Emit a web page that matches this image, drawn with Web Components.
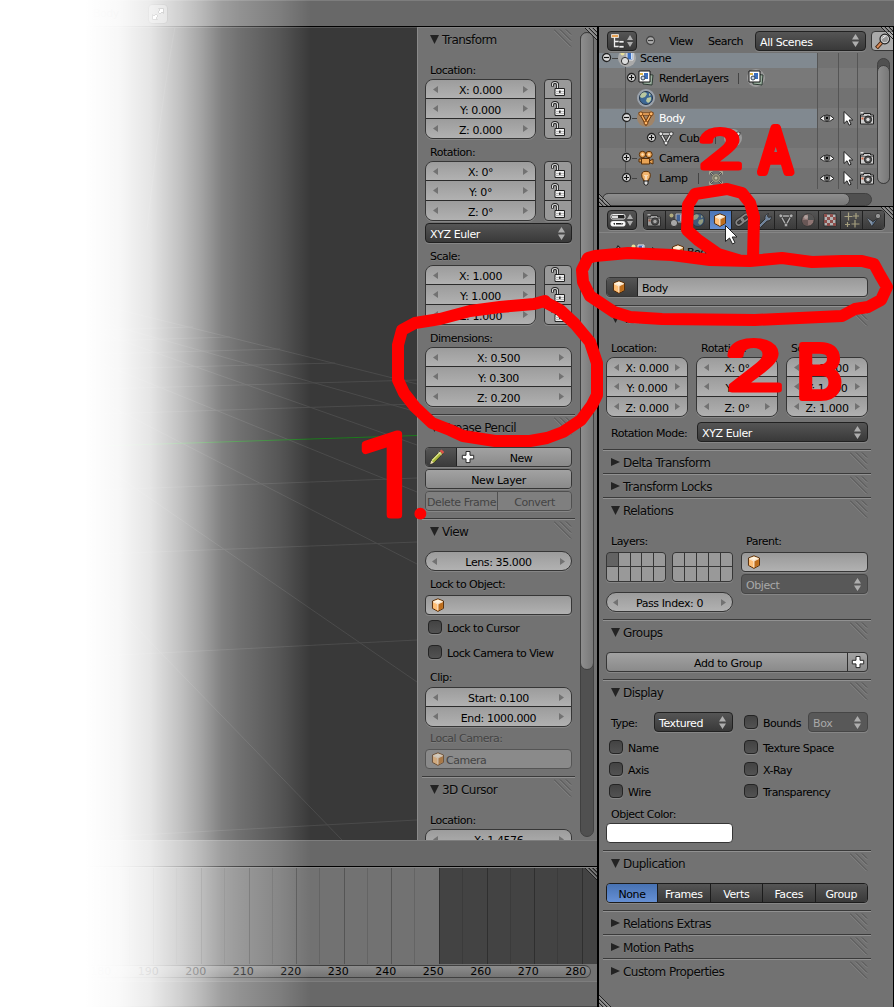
<!DOCTYPE html>
<html lang="en">
<head>
<meta charset="utf-8">
<title>Blender</title>
<style>
html,body{margin:0;padding:0;background:#fff;overflow:hidden}
body{font:11px/16px "DejaVu Sans",sans-serif;letter-spacing:-.5px;color:#000}
</style>
</head>
<body>
<bl-app></bl-app>
<script>
const def=(name,render)=>customElements.define(name,class extends HTMLElement{
  constructor(){super();this.attachShadow({mode:'open'});}
  connectedCallback(){
    const t=document.createElement('template');
    t.innerHTML=render(this);
    this.shadowRoot.replaceChildren(t.content.cloneNode(true));
  }
});

const scene='<path d="M8 2h6v8H8z" fill="#3d6fc0" stroke="#eee"/><path d="M12 3h1.5v6H12z" fill="#cfe0f5"/><circle cx="6" cy="11" r="3.6" fill="#ddd" stroke="#333"/><circle cx="3.5" cy="3.5" r="2" fill="#e9e09a"/>';
const layers='<path d="M5 4l10 1-1 10-9-1z" fill="#9ab09e" stroke="#2d3a33"/><path d="M1 1h11v11H1z" fill="#fff" stroke="#111"/><path d="M6 3h4v6H6z" fill="#3a6ebd"/><circle cx="5" cy="8" r="2" fill="#c8d4e4" stroke="#345"/><path d="M2 3h3v2H2z" fill="#dcb54a"/>';
const globe='<circle cx="8" cy="8" r="6.5" fill="#3c6795" stroke="#24364a"/><path d="M4 3q4-2 5 1l-2 3-3 1-2-1q0-2 2-4zM9 8l4-1q1 4-3 6l-2-2zM11 3l2 2-2 1z" fill="#b9c8a0"/>';
const tri=(c,d)=>`<path d="M3 4h10L8 13z" fill="none" stroke="${d}" stroke-width="3.2"/><path d="M3 4h10L8 13z" fill="none" stroke="${c}" stroke-width="1.4"/><g fill="${c}" stroke="${d}" stroke-width=".8"><circle cx="2.8" cy="3.8" r="1.9"/><circle cx="13.2" cy="3.8" r="1.9"/><circle cx="8" cy="13" r="1.9"/></g>`;
const ICONS={
  cube:'<g transform="translate(.6 .6) scale(.92)"><path d="M8 1.3l6 2.4v8L8 15 2 11.700v-8z" fill="#e79a42" stroke="#4c2606"/><path d="M8 2l5.200 2L8 6.500 2.800 4z" fill="#fff3df"/><path d="M2.700 4.500L8 7v7.200l-5.300-2.800z" fill="#ffc078"/><path d="M13.300 4.500L8 7v7.200l5.300-2.800z" fill="#bd6d1c"/><path d="M2.700 4.400L8 6.900l5.300-2.500M8 7v6.800" fill="none" stroke="#fff" stroke-width=".9"/></g>',
  lock:'<path d="M2.500 5.500V3.500q0-2 2.500-2t2.500 2V8" fill="none" stroke="#222" stroke-width="3"/><path d="M2.500 5V3.500q0-2 2.500-2t2.500 2V8" fill="none" stroke="#ddd" stroke-width="1.200"/><path d="M5 7.500h9.500v7H5z" fill="#eee" stroke="#222"/><path d="M5.500 10.500h8.500M5.500 12.500h8.500" stroke="#bbb"/><path d="M9.200 9.500h1.300v2.500H9.200z" fill="#111"/>',
  plus:'<path d="M6 2.500h4v3.800h3.700v3.600H10v3.700H6V9.900H2.300V6.300H6z" fill="#fff" stroke="#2a2a2a"/>',
  pencil:'<path d="M1.500 15l1-4L11 2l3 2.700-8.800 9z" fill="#a9b83a" stroke="#222" stroke-width=".8"/><path d="M3 11.500L11.500 3" stroke="#dde28a" stroke-width="1.300"/><path d="M10.500 2l2-1.500 2.700 2.400-1.500 2z" fill="#d9534a"/><path d="M9.500 3.200l3 2.600" stroke="#ddd"/><path d="M1.200 15.200l1-3.700 2.600 2.300z" fill="#eddcb0"/>',
  eye:'<path d="M1 8.500Q8 1.500 15 8.500 8 14.500 1 8.500z" fill="#fff" stroke="#222"/><circle cx="8" cy="8" r="2.800" fill="#777" stroke="#333" stroke-width=".8"/><circle cx="8" cy="8" r="1.200" fill="#000"/>',
  cursor:'<path d="M4 1.500v12l3-2.700 2.100 4.400 2-1-2-4.200h3.700z" fill="#fff" stroke="#222"/>',
  render:'<path d="M1.500 5h3V3.500h7V5h3v9h-13z" fill="#ccc" stroke="#222"/><path d="M2 6.500h12" stroke="#777"/><circle cx="9" cy="9.500" r="3.600" fill="#555" stroke="#222"/><circle cx="9" cy="9.500" r="1.700" fill="#ddd"/><path d="M2.500 7.500h2v2h-2z" fill="#c64"/><path d="M1.500 2h3v1.500h-3z" fill="#ddd"/>',
  scene, layers:layers, globe:globe,
  meshO:tri('#ffb769','#6b3508'), mesh:tri('#e8e8e8','#333'),
  camera:'<g fill="#e8a355" stroke="#5a3008"><circle cx="4.500" cy="4.500" r="3.200"/><circle cx="11" cy="4.500" r="3.200"/><path d="M3.500 8.500h8V14h-8z"/><path d="M11.500 11l3.500-2v5l-3.500-1.500zM1 9h2.500v3H1z"/></g><g fill="#ffe3bb"><circle cx="4.500" cy="4.500" r="1.200"/><circle cx="11" cy="4.500" r="1.200"/></g>',
  lamp:'<path d="M5.500 11Q5.500 9 4 7.300 2.500 1.300 8 1.300T12 7.300Q10.500 9 10.500 11z" fill="#f3b56e" stroke="#5a3008"/><path d="M6.500 5l1.500 1.500L9.500 5M8 6.500V11" stroke="#fff" fill="none"/><path d="M6 11h4v3l-2 1.500L6 14z" fill="#ddd" stroke="#222"/>',
  lampData:'<g opacity=".75"><g fill="none" stroke="#444" stroke-width="2"><path d="M2 2l3 3M14 2l-3 3M2 14l3-3M14 14l-3-3"/></g><g fill="none" stroke="#bbb8a0"><path d="M1.500 4.500v-3h3M11.500 1.500h3v3M14.500 11.500v3h-3M4.500 14.500h-3v-3M2 2l3 3M14 2l-3 3M2 14l3-3M14 14l-3-3"/></g><circle cx="8" cy="8" r="3.400" fill="#77755e" stroke="#b5b08a"/><circle cx="8" cy="8" r="1.500" fill="#ddd8b8"/></g>',
  link:'<g fill="none" stroke="#262626" stroke-width="3.600"><rect x="1.500" y="7" width="8" height="5" rx="2.500" transform="rotate(-38 6 9)"/><rect x="7" y="3.500" width="8" height="5" rx="2.500" transform="rotate(-38 11 6)"/></g><g fill="none" stroke="#aaa" stroke-width="1.700"><rect x="1.500" y="7" width="8" height="5" rx="2.500" transform="rotate(-38 6 9)"/><rect x="7" y="3.500" width="8" height="5" rx="2.500" transform="rotate(-38 11 6)"/></g>',
  wrench:'<path d="M2.500 13.500L9 7q-1-4 3.500-5.500L11.500 4l1.200 1.500 2.600-1q.5 4.500-4.200 4.600L4.500 15.500z" fill="#88a5c8" stroke="#222"/>',
  material:'<circle cx="8" cy="8" r="6.200" fill="#b5908c" stroke="#2a2a2a"/><path d="M8 2v6h6a6 6 0 0 0-6-6z" fill="#5a5a5a"/><path d="M2 8h6v6a6 6 0 0 1-6-6z" fill="#7d6260"/><circle cx="6" cy="5" r="2" fill="#e3cbc7"/>',
  texture:'<path d="M2 2h12v12H2z" fill="#eee" stroke="#222"/><path d="M2 2h3v3H2zM8 2h3v3H8zM5 5h3v3H5zM11 5h3v3h-3zM2 8h3v3H2zM8 8h3v3H8zM5 11h3v3H5zM11 11h3v3h-3z" fill="#b5544f"/>',
  particles:'<g stroke="#d9cf9d" stroke-width="1.200"><path d="M4.500.5v8M.5 4.500h8M12 1v6M9 4h6M11 8v7.500M7.500 12h8M3.500 10v5M1 12.500h5"/></g>',
  physics:'<path d="M1 6l5 8.500L12 6 7 9.500z" fill="#6c8fb8" stroke="#222"/><path d="M1 6l5 3.500L6 14z" fill="#a7bfda"/><circle cx="12" cy="4" r="2.700" fill="#bbb" stroke="#333"/>',
  tree:'<path d="M4.500 4v9.500H9M4.500 8.500H9" fill="none" stroke="#eee" stroke-width="1.300"/><path d="M1.500 1.500h7v3h-7z" fill="#e8a355" stroke="#eee" stroke-width=".8"/><path d="M9 7.500h5v2.500H9zM9 12.500h5V15H9z" fill="#eee" stroke="#222" stroke-width=".6"/>',
  props:'<g stroke="#eee"><rect x="1" y="2.500" width="14" height="4.500" rx="1.500" fill="#222"/><rect x="1" y="9.500" width="14" height="4.500" rx="1.500" fill="#fff"/></g><path d="M2 3.500h6v2.500H2z" fill="#ddd"/><path d="M6 11h5v1.500H6zM5 10.700v2.200l-2-1.100zM11.500 10.700v2.200l2-1.100z" fill="#222"/>',
  search:'<path d="M7 9L1.500 15" stroke="#41210a" stroke-width="4"/><path d="M7 9L2 14.500" stroke="#d98b5a" stroke-width="2"/><circle cx="9.800" cy="6" r="4.800" fill="#d9d9d9" stroke="#222" stroke-width="1.200"/><circle cx="9.800" cy="6" r="3.200" fill="#999"/><path d="M7.500 5.500q1-2 3-2" stroke="#fff" fill="none"/>',
  pin:'<path d="M1 14l5-4M5 8l3-5 6 6-5 2z" fill="#ddd" stroke="#222" stroke-width="1.200"/>',
  full:'<g fill="#fff" stroke="#333"><path d="M8.500 2.500h5V7.500L12 6 10 8 8 6l2-2zM7.500 13.500h-5V8.500L4 10l2-2 2 2-2 2z"/></g>'
};

def('bl-icon',e=>`<style>:host{display:block;flex:none;width:16px;height:16px}svg{display:block;width:100%;height:100%}</style><svg viewBox="0 0 16 16">${ICONS[e.getAttribute('name')]}</svg>`);

def('bl-grip',()=>`<style>:host{display:block;width:18px;height:18px}svg{display:block}</style>
<svg width="18" height="18" fill="none"><path d="M0 1.500l16.500 16.500M6 1.500l11 11M12 1.500l5 5" stroke="#8b8b8b"/><path d="M0 .5l17 17M6 .5l11 11M12 .5l5 5" stroke="#505050"/></svg>`);

def('bl-corner',()=>`<style>:host{display:block;width:12px;height:12px;position:absolute}svg{display:block}</style>
<svg width="12" height="12" fill="none"><path d="M0 0l12 12M4 0l8 8M8 0l4 4" stroke="#222"/><path d="M1.500 0l11 11M5.500 0l7 7M9.500 0l3 3" stroke="#aaa"/></svg>`);

def('bl-panel',e=>`<style>
:host{display:flex;flex-direction:column;box-sizing:border-box;border-top:1px solid #3a3a3a;flex:none}
:host([first]){border-top-color:transparent}
header{height:23px;box-sizing:border-box;border-top:1px solid #919191;display:flex;align-items:flex-start;padding:0 3px 0 8px;font-size:12px;letter-spacing:-.55px;color:#080808;text-shadow:0 1px 0 rgba(255,255,255,.12);flex:none}
:host([first]) header{border-top-color:transparent}
svg{margin-top:7px;flex:none}span{flex:1;padding-left:3px;line-height:16px;margin-top:4px;white-space:nowrap}
bl-grip{margin-top:1px}
.b{padding:0 3px;display:flex;flex-direction:column}
</style><header><svg width="9" height="9"><path d="${e.hasAttribute('closed')?'M0 0L9 4 0 8z':'M0 0h9L4.500 9z'}" fill="#232323"/></svg><span>${e.getAttribute('label')}</span><bl-grip></bl-grip></header><div class="b"><slot></slot></div>`);

def('bl-num',e=>`<style>
:host{display:flex;box-sizing:border-box;height:20px;align-items:flex-end;justify-content:space-between;padding:0 7px;background:linear-gradient(#9c9c9c,#b1b1b1);position:relative;border-top:1px solid #2b2b2b;line-height:14px;letter-spacing:-.4px}
:host(:first-child){height:18px;border-top:0}
:host([solo]){height:20px;border:1px solid #363636;border-radius:10px;box-shadow:0 1px 0 #868686;padding:0 6px}
span{flex:1;text-align:center;white-space:nowrap}svg{align-self:center;flex:none}
</style><svg width="5" height="7"><path d="M5 0v7L0 3.500z" fill="#727272"/></svg><span>${e.getAttribute('label')}</span><svg width="5" height="7"><path d="M0 0v7l5-3.500z" fill="#727272"/></svg>`);

def('bl-stack',()=>`<style>:host{display:flex;flex-direction:column;box-sizing:border-box;border:1px solid #363636;border-radius:8px;overflow:hidden;box-shadow:0 1px 0 #868686}</style><slot></slot>`);

def('bl-locks',()=>`<style>:host{display:flex;flex-direction:column;box-sizing:border-box;width:28px;height:60px;border:1px solid #363636;border-radius:4px;overflow:hidden;box-shadow:0 1px 0 #868686;background:#999}
div{height:20px;box-sizing:border-box;border-top:1px solid #2b2b2b;display:flex;justify-content:center;align-items:center;flex:none}div:first-of-type{height:18px;border:0}</style><div><bl-icon name="lock"></bl-icon></div><div><bl-icon name="lock"></bl-icon></div><div><bl-icon name="lock"></bl-icon></div>`);

def('bl-menu',e=>`<style>
:host{display:flex;box-sizing:border-box;height:20px;border:1px solid #212121;border-radius:4px;background:linear-gradient(#555,#393939);color:#fff;align-items:flex-end;justify-content:space-between;padding:0 6px 0 4px;box-shadow:0 1px 0 #868686;line-height:14px;letter-spacing:-.4px}
:host([off]){background:#585858;color:#a8a8a8;border-color:#464646}
svg{align-self:center}
</style><span>${e.getAttribute('label')}</span><svg width="7" height="13"><path d="M0 5.500L3.500 0 7 5.500zM0 7.500h7L3.500 13z" fill="#aeaeae"/></svg>`);

def('bl-check',e=>`<style>:host{display:flex;height:16px;align-items:center;gap:5px;white-space:nowrap}
i{box-sizing:border-box;width:14px;height:14px;border:1px solid #242424;border-radius:4px;background:linear-gradient(#434343,#525252);box-shadow:0 1px 0 #868686;margin-left:3px}span{margin-top:4px}</style><i></i><span>${e.getAttribute('label')}</span>`);

def('bl-field',e=>`<style>
:host{display:flex;box-sizing:border-box;height:20px;border:1px solid #363636;border-radius:4px;background:linear-gradient(#999,#b1b1b1);box-shadow:0 1px 0 #868686;align-items:flex-end;line-height:14px}
:host([off]){background:#8a8a8a;border-color:#555;color:#444;box-shadow:none}:host([off]) bl-icon{opacity:.6}
bl-icon{align-self:center;margin:0 0 0 4px}
</style><bl-icon name="cube"></bl-icon><slot></slot>`);

def('bl-buttons',e=>{
  const sel=e.getAttribute('sel');
  return `<style>
:host{display:flex;box-sizing:border-box;height:20px;border:1px solid #363636;border-radius:4px;overflow:hidden;box-shadow:0 1px 0 #868686;line-height:14px;letter-spacing:-.4px}
div{flex:1 1 0;display:flex;align-items:flex-end;justify-content:center;white-space:nowrap;background:linear-gradient(#a2a2a2,#8a8a8a);border-left:1px solid #303030}
:host([off]){border-color:#505050}:host([off]) div{background:#7f7f7f;color:#444;border-color:#505050}
:host([dark]){border-color:#1c1c1c}:host([dark]) div{background:linear-gradient(#555,#393939);color:#fff;border-color:#1c1c1c}
:host([dark]) div.s{background:linear-gradient(#4772b3,#6690d4);color:#000;flex:0 0 50px}
div:first-of-type{border-left:0!important}
:host([off]) div:first-of-type{flex:0 0 71px}
</style>`+e.getAttribute('items').split('|').map(t=>`<div${t===sel?' class="s"':''}>${t}</div>`).join('');
});

def('bl-layers',e=>`<style>:host{display:grid;grid-template-columns:repeat(5,1fr);grid-template-rows:13px 14px;gap:1px;box-sizing:border-box;height:30px;border:1px solid #363636;border-radius:4px;background:#363636;overflow:hidden;box-shadow:0 1px 0 #868686}i{background:#999}i.on{background:#636363}</style>`+Array.from({length:10},(_,i)=>`<i${i===0&&e.hasAttribute('on')?' class="on"':''}></i>`).join(''));

def('bl-scroll',()=>`<style>:host{display:flex;box-sizing:border-box;border:1px solid #404040;border-radius:7px;background:#505050}
i{box-sizing:border-box;margin:-1px;border:1px solid #404040;border-radius:7px;background:linear-gradient(90deg,#8e8e8e,#787878);width:var(--w,13px);height:var(--h,13px);flex:none}
:host([h]) i{background:linear-gradient(#8e8e8e,#787878)}</style><i></i>`);

def('bl-toggle',e=>`<style>:host{display:block;flex:none;width:11px;height:11px}svg{display:block}</style><svg width="11" height="11"><circle cx="5.500" cy="5.500" r="4" fill="#ddd" stroke="#222" stroke-width="1.300"/><path d="M3 5.500h5${e.hasAttribute('open')?'':'M5.500 3v5'}" stroke="#111" stroke-width="1.200"/></svg>`);

def('bl-row',e=>{
  const a=+e.getAttribute('x'),g=+e.getAttribute('gap')||0,t=e.getAttribute('toggle'),extra=e.getAttribute('extra');
  return `<style>
:host{display:flex;height:20px;flex:none;align-items:center;position:relative}
:host([sel]) .m{background:#818990}:host([alt]){background:#797979}
.m{display:flex;align-items:center;width:218px;height:19px;box-sizing:border-box;padding-left:${a}px;white-space:nowrap;flex:none}
.g{width:${g}px;height:1px;background:#444;flex:none}
bl-toggle{margin-top:-2px}
.ic{width:18px;height:18px;border-radius:9px;display:flex;align-items:center;justify-content:center;flex:none;margin-top:-1px;background:${e.getAttribute('halo')||'none'}}
.t{margin-left:4px;padding-top:1px}
b{width:1px;height:11px;background:#444;margin:0 8px 0 ${extra==='layers'?9:10}px}
.c{display:flex;width:60px}
.c bl-icon:nth-child(1){margin-left:2px}.c bl-icon:nth-child(2){margin-left:5px}.c bl-icon:nth-child(3){margin-left:3px}
</style><div class="m">${t?`<bl-toggle ${t==='open'?'open':''}></bl-toggle>`:''}<div class="g"></div><div class="ic"><bl-icon name="${e.getAttribute('icon')}"></bl-icon></div><span class="t">${e.getAttribute('label')}</span>${extra?`<b></b><div class="ic" style="background:${extra==='lampData'?'none':'#9a9a9a'}"><bl-icon name="${extra}"></bl-icon></div>`:''}</div>${e.hasAttribute('ctl')?'<div class="c"><bl-icon name="eye"></bl-icon><bl-icon name="cursor"></bl-icon><bl-icon name="render"></bl-icon></div>':''}`;
});

def('bl-viewport',()=>`<style>:host{display:block;background:#393939;border-top:1px solid #555;box-sizing:border-box;overflow:hidden}svg{display:block;margin-top:-1px}</style>
<svg width="417" height="813" viewBox="0 27 417 813" fill="none" stroke="#4b4b4b">
<path d="M100 305L417 384M100 322L417 412M100 333L417 445M100 363L417 492M100 401L417 564M100 464L417 682M100 590L342 840M175 27Q160 110 147 230"/>
<path d="M100 330L193 327M100 341L230 337M100 354L280 349M100 369L335 363M100 389L417 380M100 414L417 404M100 490L417 478M100 554L417 542M100 656L417 640M100 837L417 820"/>
<path d="M100 446L417 435.500" stroke="#1c7a1c"/></svg>`);

def('bl-timeline',()=>{
  let lines='',labels='';
  for(let i=-2;i<9;i++){const x=Math.round(201+47.600*i)+.5;
    lines+=`<path d="M${x} 0v96" stroke="${i>4?'#2f2f2f':'#555'}"/><path d="M${x+23} 0v96" stroke="${i>4?'#3b3b3b':'#646464'}"/>`;
    labels+=`<span>${200+10*i}</span>`;}
  return `<style>:host{display:flex;flex-direction:column;background:#727272;box-sizing:border-box;border-top:1px solid #858585;height:114px;position:relative}
svg{display:block;flex:none}
.s{margin:1px 6px 0 60px;height:13px;box-sizing:border-box;border:1px solid #404040;border-width:1px 1px 1px 0;border-radius:0 7px 7px 0;background:linear-gradient(#8d8d8d,#737373);display:flex;padding-left:17px}
span{width:47.500px;text-align:center;flex:none;line-height:11px;letter-spacing:0}
</style><svg width="597" height="96"><path d="M439 0h158v96H439z" fill="#434343"/>${lines}</svg><div class="s">${labels}</div><bl-corner style="right:0;top:0"></bl-corner>`;
});

def('bl-marks',()=>`<style>:host{display:block;position:absolute;inset:0;pointer-events:none}svg{display:block}</style>
<svg width="894" height="1007" fill="none" stroke="red" stroke-width="12" stroke-linecap="round" stroke-linejoin="round">
<path d="M545 301L534 304 500 307 470 311 440 319 415 323 402 330 398 345 398 380 404 393 415 407 432 423 450 430 463 436 495 441 530 441 547 438 563 432 581 420 592 405 597 395 597 363 590 342 575 324 560 310 545 302"/>
<path d="M595 256L588 258 582 270 583 282 590 296 602 304 614 312 630 317 662 319 755 320 842 316 855 309 868 307 881 300 887 287 880 275 874 264 862 261 842 261 812 262 782 258 750 261 710 260 672 255 628 253z"/>
<path d="M738 260L718 254 698 240 687 230 688 205 695 194 727 189 742 193 750 203 754 217 753 259"/>
<g fill="red" font-family="Roboto" font-weight="400" letter-spacing="0">
<text transform="translate(699.500 167.500) scale(1.400 1)" font-size="53" stroke-width="5">2</text>
<text transform="translate(759.500 172) scale(.8 1)" font-size="62" stroke-width="8">A</text>
<text transform="translate(726.500 389.500) scale(1.450 1)" font-size="68" stroke-width="5">2</text>
<text transform="translate(796 397.500) scale(1 1)" font-size="75" stroke-width="6">B</text>
<text transform="translate(354.500 515) scale(1.140 1)" font-size="113" font-weight="300" stroke-width="7">1</text>
<text transform="translate(411.500 517)" font-size="70" stroke-width="4">.</text>
</g></svg>`);

def('bl-app',()=>`<style>
:host{display:grid;grid-template:27px 980px / 597px 297px;width:894px;height:1007px;position:relative;overflow:hidden;background:#727272}
.top{grid-column:1/3;background:#686868;border-top:1px solid #7d7d7d;border-bottom:1px solid #000;box-sizing:border-box;display:flex;align-items:center;padding-left:93px;gap:29px}
.full{display:flex;width:18px;height:18px;border:1px solid #444;border-radius:4px;background:#999;align-items:center;justify-content:center}
.left,.right{display:flex;flex-direction:column;min-width:0}
.mid{display:flex;height:813px}bl-viewport{width:417px}
.bar{box-sizing:border-box;background:#686868;border-top:1px solid #7d7d7d}
.n{width:180px;box-sizing:border-box;border-left:1px solid #8a8a8a;border-top:1px solid #858585;display:flex;overflow:hidden;position:relative;padding-left:4px}
.np{width:153px;flex:none;margin-top:-2px;height:830px}
.n bl-scroll{width:14px;height:805px;margin:4px 0 0 5px;--w:14px;--h:638px}
.l{height:16px;line-height:18px;white-space:nowrap;flex:none;padding-left:5px;text-shadow:0 1px 0 rgba(255,255,255,.1)}
.r{display:flex;justify-content:space-between}
.st{width:111px;height:60px}
.right{border-left:2px solid #000;border-right:1px solid #000;position:relative}
.oh{height:26px;border-top:1px solid #858585;box-sizing:border-box;display:flex;align-items:center;overflow:hidden;padding-left:8px;flex:none}
.oh>*{flex:none}
.ed{box-sizing:border-box;width:30px;height:20px;border:1px solid #212121;border-radius:4px;background:linear-gradient(#555,#393939);display:flex;align-items:center;justify-content:space-between;padding:0 3px 0 2px;flex:none;box-shadow:0 1px 0 #868686}
.se{box-sizing:border-box;width:32px;height:20px;border:1px solid #363636;border-radius:4px;background:#aaa;margin-left:5px;padding:1px 3px}
.tree{height:153px;display:flex;position:relative;flex:none}
.rows{width:278px;height:136px;overflow:hidden;position:relative}
.rows bl-row:first-child{margin-top:-5px}
.v{position:absolute;top:0;width:1px;height:136px;background:#555}
.vs{width:13px;height:126px;margin-top:5px;align-items:flex-end;--h:119px;--w:13px}
.hs{position:absolute;left:3px;top:140px;width:270px;height:13px;--w:248px}
.ph{height:27px;box-sizing:border-box;border-top:1px solid #000;display:flex;align-items:center;padding:0 0 0 8px;border-bottom:1px solid #858585;flex:none}
.tabs{display:flex;margin-left:6px;width:242px;height:20px;box-sizing:border-box;border:1px solid #222;border-radius:4px;overflow:hidden;box-shadow:0 1px 0 #868686}
.tabs i{flex:1;display:flex;align-items:center;justify-content:center;background:linear-gradient(#555,#3b3b3b);border-left:1px solid #222}
.tabs i:first-child{border:0}.tabs bl-icon{opacity:.65}.tabs .s{background:linear-gradient(#4a76b8,#648fd2)}.tabs .s bl-icon{opacity:1}
.crumb{display:flex;align-items:center;height:20px;margin-top:8px;padding-left:11px;flex:none}
.pp{width:268px;margin-left:4px;display:flex;flex-direction:column}
.name{display:flex;height:20px;margin:16px 3px 8px;box-sizing:border-box;border:1px solid #363636;border-radius:4px;background:linear-gradient(#999,#b1b1b1);align-items:flex-end;overflow:hidden;box-shadow:0 1px 0 #868686;flex:none;line-height:14px}
.name div{width:31px;height:18px;background:linear-gradient(#555,#3b3b3b);border-right:1px solid #222;display:flex;align-items:center;padding-left:4px;box-sizing:border-box;margin-right:4px}
.fade{position:absolute;left:0;top:0;width:311px;height:1007px;background:linear-gradient(90deg,#fff 85px,rgba(255,255,255,.96) 120px,rgba(255,255,255,.87) 150px,rgba(255,255,255,.69) 180px,rgba(255,255,255,.54) 201px,rgba(255,255,255,.36) 222px,rgba(255,255,255,.28) 240px,rgba(255,255,255,.145) 280px,rgba(255,255,255,0) 311px)}
.ptr{position:absolute;left:724px;top:224px}
</style>
<div class="top"><span>Body</span><div class="full"><bl-icon name="full"></bl-icon></div></div>
<div class="left">
 <div class="mid"><bl-viewport></bl-viewport>
  <div class="n"><div class="np">
   <bl-panel first label="Transform" style="height:388px">
    <div class="l" style="margin-top:12px">Location:</div>
    <div class="r" style="margin-top:1px"><bl-stack class="st"><bl-num label="X: 0.000"></bl-num><bl-num label="Y: 0.000"></bl-num><bl-num label="Z: 0.000"></bl-num></bl-stack><bl-locks></bl-locks></div>
    <div class="l" style="margin-top:5px">Rotation:</div>
    <div class="r" style="margin-top:1px"><bl-stack class="st"><bl-num label="X: 0°"></bl-num><bl-num label="Y: 0°"></bl-num><bl-num label="Z: 0°"></bl-num></bl-stack><bl-locks></bl-locks></div>
    <bl-menu label="XYZ Euler" style="margin-top:2px"></bl-menu>
    <div class="l" style="margin-top:5px">Scale:</div>
    <div class="r" style="margin-top:1px"><bl-stack class="st"><bl-num label="X: 1.000"></bl-num><bl-num label="Y: 1.000"></bl-num><bl-num label="Z: 1.000"></bl-num></bl-stack><bl-locks></bl-locks></div>
    <div class="l" style="margin-top:5px">Dimensions:</div>
    <bl-stack style="margin-top:1px;height:60px"><bl-num label="X: 0.500"></bl-num><bl-num label="Y: 0.300"></bl-num><bl-num label="Z: 0.200"></bl-num></bl-stack>
   </bl-panel>
   <bl-panel label="Grease Pencil" style="height:104px">
    <div style="margin-top:9px;display:flex;height:20px;box-sizing:border-box;border:1px solid #363636;border-radius:4px;background:linear-gradient(#a2a2a2,#8a8a8a);overflow:hidden;box-shadow:0 1px 0 #868686;align-items:flex-end;line-height:14px"><div style="width:31px;height:18px;background:linear-gradient(#555,#3b3b3b);border-right:1px solid #222;padding:1px 0 0 3px;box-sizing:border-box"><bl-icon name="pencil"></bl-icon></div><bl-icon name="plus" style="margin:0 0 1px 3px"></bl-icon><span style="flex:1;text-align:center;padding-right:5px">New</span></div>
    <bl-buttons items="New Layer" style="margin-top:2px"></bl-buttons>
    <bl-buttons off items="Delete Frame|Convert" style="margin-top:2px"></bl-buttons>
   </bl-panel>
   <bl-panel label="View" style="height:258px">
    <bl-num solo label="Lens: 35.000" style="margin-top:9px"></bl-num>
    <div class="l" style="margin-top:5px">Lock to Object:</div>
    <bl-field style="margin-top:3px"></bl-field>
    <bl-check label="Lock to Cursor" style="margin-top:4px"></bl-check>
    <bl-check label="Lock Camera to View" style="margin-top:9px"></bl-check>
    <div class="l" style="margin-top:9px">Clip:</div>
    <bl-stack style="margin-top:2px;height:40px"><bl-num label="Start: 0.100"></bl-num><bl-num label="End: 1000.000"></bl-num></bl-stack>
    <div class="l" style="margin-top:3px;color:#444">Local Camera:</div>
    <bl-field off style="margin-top:3px"><span>Camera</span></bl-field>
   </bl-panel>
   <bl-panel label="3D Cursor">
    <div class="l" style="margin-top:12px">Location:</div>
    <bl-stack style="margin-top:1px;height:60px"><bl-num label="X: 1.4576"></bl-num></bl-stack>
   </bl-panel>
  </div><bl-scroll></bl-scroll><bl-corner style="right:0;top:0"></bl-corner></div>
 </div>
 <div class="bar" style="height:27px;border-bottom:1px solid #000"></div>
 <bl-timeline></bl-timeline>
 <div class="bar" style="height:26px;border-bottom:1px solid #484848"></div>
</div>
<div class="right">
 <div class="oh"><div class="ed"><bl-icon name="tree"></bl-icon><svg width="6" height="12"><path d="M0 5L3 0l3 5zM0 7h6l-3 5z" fill="#aeaeae"/></svg></div>
  <bl-toggle open style="margin-left:8px;opacity:.55"></bl-toggle><span style="margin-left:13px;padding-top:2px">View</span><span style="margin-left:15px;padding-top:2px;width:47px">Search</span><bl-menu label="All Scenes" style="width:111px"></bl-menu><div class="se"><bl-icon name="search"></bl-icon></div></div>
 <div class="tree"><div class="rows">
  <bl-row x="2" toggle="open" gap="6" icon="scene" label="Scene" sel halo="#aaa"></bl-row>
  <bl-row x="27" toggle="closed" icon="layers" label="RenderLayers" extra="layers" alt></bl-row>
  <bl-row x="38" icon="globe" label="World" halo="#9aa2ac"></bl-row>
  <bl-row x="22" toggle="open" gap="5" icon="meshO" label="Body" sel alt ctl halo="#a08468" style="color:#fff"></bl-row>
  <bl-row x="47" toggle="closed" icon="mesh" label="Cube" extra="mesh"></bl-row>
  <bl-row x="22" toggle="closed" gap="5" icon="camera" label="Camera" alt ctl></bl-row>
  <bl-row x="22" toggle="closed" gap="5" icon="lamp" label="Lamp" extra="lampData" ctl></bl-row>
  <div class="v" style="left:26px;top:14px;height:46px"></div><div class="v" style="left:26px;top:69px;height:30px"></div><div class="v" style="left:26px;top:109px;height:10px"></div>
  <div class="v" style="left:218px"></div><div class="v" style="left:239px"></div><div class="v" style="left:258px"></div>
 </div><bl-scroll class="vs"></bl-scroll><bl-scroll h class="hs"></bl-scroll></div>
 <div class="ph"><div class="ed"><bl-icon name="props"></bl-icon><svg width="6" height="12"><path d="M0 5L3 0l3 5zM0 7h6l-3 5z" fill="#aeaeae"/></svg></div>
  <div class="tabs">${['render','scene','globe','cube','link','wrench','mesh','material','texture','particles','physics'].map(n=>`<i${n==='cube'?' class="s"':''}><bl-icon name="${n}"></bl-icon></i>`).join('')}</div></div>
 <div class="crumb"><bl-icon name="pin"></bl-icon><bl-icon name="scene" style="margin-left:4px"></bl-icon><svg width="6" height="8" style="margin-left:6px"><path d="M0 0l6 4-6 4z" fill="#222"/></svg><bl-icon name="cube" style="margin:0 1px 0 12px"></bl-icon><span style="padding-top:4px">Body</span></div>
 <div class="pp">
  <div class="name"><div><bl-icon name="cube"></bl-icon></div><span>Body</span></div>
  <bl-panel label="Transform" style="height:144px">
   <div class="r" style="margin-top:11px;margin-bottom:1px"><div class="l" style="width:77px">Location:</div><div class="l" style="width:77px">Rotation:</div><div class="l" style="width:77px">Scale:</div></div>
   <div class="r"><bl-stack style="width:82px;height:60px"><bl-num label="X: 0.000"></bl-num><bl-num label="Y: 0.000"></bl-num><bl-num label="Z: 0.000"></bl-num></bl-stack><bl-stack style="width:82px;height:60px"><bl-num label="X: 0°"></bl-num><bl-num label="Y: 0°"></bl-num><bl-num label="Z: 0°"></bl-num></bl-stack><bl-stack style="width:82px;height:60px"><bl-num label="X: 1.000"></bl-num><bl-num label="Y: 1.000"></bl-num><bl-num label="Z: 1.000"></bl-num></bl-stack></div>
   <div class="r" style="margin-top:5px"><div class="l" style="padding-top:3px">Rotation Mode:</div><bl-menu label="XYZ Euler" style="width:171px"></bl-menu></div>
  </bl-panel>
  <bl-panel closed label="Delta Transform"></bl-panel>
  <bl-panel closed label="Transform Locks"></bl-panel>
  <bl-panel label="Relations" style="height:122px">
   <div class="r" style="margin-top:12px"><div style="width:127px"><div class="l">Layers:</div><div class="r" style="margin-top:3px"><bl-layers on style="width:60px"></bl-layers><bl-layers style="width:61px"></bl-layers></div><bl-num solo label="Pass Index: 0" style="margin-top:10px"></bl-num></div>
   <div style="width:127px"><div class="l">Parent:</div><bl-field style="margin-top:3px"></bl-field><bl-menu off label="Object" style="margin-top:2px"></bl-menu></div></div>
  </bl-panel>
  <bl-panel label="Groups" style="height:60px"><div style="margin-top:9px;display:flex;height:20px;box-sizing:border-box;border:1px solid #363636;border-radius:4px;background:linear-gradient(#a2a2a2,#8a8a8a);box-shadow:0 1px 0 #868686;align-items:flex-end;line-height:14px;letter-spacing:-.4px"><span style="flex:1;text-align:center;padding-left:2px">Add to Group</span><div style="height:18px;border-left:1px solid #303030;padding:1px 1px 0 2px;box-sizing:border-box"><bl-icon name="plus"></bl-icon></div></div></bl-panel>
  <bl-panel label="Display" style="height:171px">
   <div class="r" style="margin-top:9px"><div class="r" style="width:127px"><div class="l" style="padding-top:3px">Type:</div><bl-menu label="Textured" style="width:79px"></bl-menu></div><div class="r" style="width:127px"><bl-check label="Bounds" style="margin-top:2px"></bl-check><bl-menu off label="Box" style="width:60px"></bl-menu></div></div>
   <div style="display:grid;grid-template-columns:135px 127px;row-gap:6px;margin-top:7px"><bl-check label="Name"></bl-check><bl-check label="Texture Space"></bl-check><bl-check label="Axis"></bl-check><bl-check label="X-Ray"></bl-check><bl-check label="Wire"></bl-check><bl-check label="Transparency"></bl-check></div>
   <div class="l" style="margin-top:7px">Object Color:</div>
   <div style="width:127px;height:20px;box-sizing:border-box;border:1px solid #363636;border-radius:4px;background:#fff;margin-top:1px"></div>
  </bl-panel>
  <bl-panel label="Duplication" style="height:60px"><bl-buttons dark sel="None" items="None|Frames|Verts|Faces|Group" style="margin-top:9px"></bl-buttons></bl-panel>
  <bl-panel closed label="Relations Extras"></bl-panel>
  <bl-panel closed label="Motion Paths"></bl-panel>
  <bl-panel closed label="Custom Properties"></bl-panel>
 </div>
 <bl-corner style="right:0;top:0"></bl-corner><bl-corner style="left:0;top:167px;transform:rotate(180deg)"></bl-corner><bl-corner style="right:0;top:180px"></bl-corner><bl-corner style="left:0;bottom:0;transform:rotate(180deg)"></bl-corner>
</div>
<div class="fade"></div>
<bl-marks></bl-marks>
<svg class="ptr" width="14" height="22"><path d="M1.500 1.500v16l4-3.500 3 6 2.500-1.300-2.800-5.700H13z" fill="#fff" stroke="#222"/></svg>`);
</script>
</body>
</html>
